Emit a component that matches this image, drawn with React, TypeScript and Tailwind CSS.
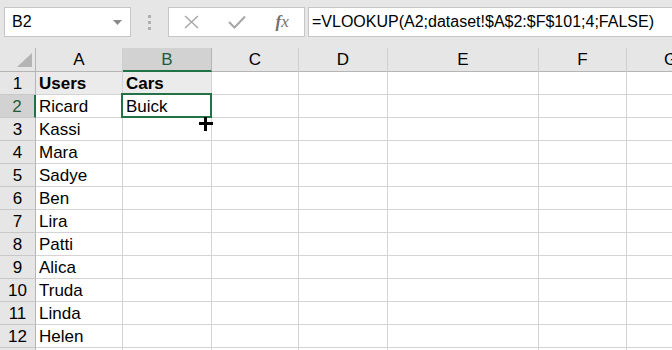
import React from "react";

const COLS = ["A", "B", "C", "D", "E", "F", "G"];
const USERS = ["Users", "Ricard", "Kassi", "Mara", "Sadye", "Ben", "Lira", "Patti", "Alica", "Truda", "Linda", "Helen"];

export default function App() {
  const font = { fontFamily: '"Liberation Sans", Arial, sans-serif' };
  return (
    <div className="w-[672px] h-[350px] overflow-hidden bg-white text-black" style={font}>
      {/* toolbar */}
      <div className="h-[48px] bg-[#e6e6e6] flex items-start pt-[7px] pl-[4px]">
        <div className="w-[127px] h-[30px] bg-white border border-[#c6c6c6] flex items-center pl-[7px] pr-[8px] text-[16px]">
          <span className="flex-1">B2</span>
          <svg width="9" height="5" viewBox="0 0 9 5"><path d="M0 0 L9 0 L4.5 5 Z" fill="#8a8a8a" /></svg>
        </div>
        <div className="w-[37px] h-[30px] flex flex-col items-center justify-center gap-[3px]">
          <div className="w-[3px] h-[3px] bg-[#b0b0b0]" />
          <div className="w-[3px] h-[3px] bg-[#b0b0b0]" />
          <div className="w-[3px] h-[3px] bg-[#b0b0b0]" />
        </div>
        <div className="w-[137px] h-[30px] bg-white border border-[#c6c6c6] flex items-center">
          <div className="w-[46px] flex justify-center">
            <svg width="15" height="14" viewBox="0 0 15 14"><path d="M1 1 L14 13 M14 1 L1 13" stroke="#a6a6a6" strokeWidth="1.4" fill="none" /></svg>
          </div>
          <div className="w-[46px] flex justify-center">
            <svg width="18" height="14" viewBox="0 0 18 14"><path d="M1 7 L6.5 12.5 L17 1.5" stroke="#a6a6a6" strokeWidth="2" fill="none" /></svg>
          </div>
          <div className="w-[44px] flex justify-center text-[#707070] text-[17px] italic" style={{ fontFamily: '"Liberation Serif", "Times New Roman", serif' }}>
            <span className="font-bold">f</span><span>x</span>
          </div>
        </div>
        <div className="ml-[3px] flex-1 h-[30px] bg-white border border-[#c6c6c6] border-r-0 flex items-center pl-[3px] text-[16px] whitespace-nowrap">
          =VLOOKUP(A2;dataset!$A$2:$F$101;4;FALSE)
        </div>
      </div>

      {/* grid */}
      <div className="relative w-[672px] overflow-hidden">
        <div className="grid grid-cols-[36px_87px_89px_87px_89px_151px_88px_88px] w-[715px] text-[17px]">
          {/* header row */}
          <div className="h-[24px] bg-[#e6e6e6] border-r border-b border-[#b5b5b5] relative">
            <svg className="absolute left-[17px] top-[5px]" width="15" height="14" viewBox="0 0 15 14"><path d="M15 0 L15 14 L0 14 Z" fill="#b4b4b4" /></svg>
          </div>
          {COLS.map((c) =>
            c === "B" ? (
              <div key={c} className="h-[24px] bg-[#d2d2d2] border-r border-[#b5b5b5] border-b-2 border-b-[#217346] flex items-center justify-center pt-[1px] text-[#1d5c3a]">
                {c}
              </div>
            ) : (
              <div key={c} className="h-[24px] bg-[#e6e6e6] border-r border-b border-r-[#cfcfcf] border-b-[#b5b5b5] flex items-center justify-center pt-[1px]">
                {c}
              </div>
            )
          )}
          {/* rows */}
          {Array.from({ length: 13 }).map((_, r) => {
            const n = r + 1;
            const sel = n === 2;
            return (
              <React.Fragment key={n}>
                <div
                  className={
                    sel
                      ? "h-[23px] bg-[#d2d2d2] border-r-2 border-r-[#217346] border-b border-b-[#c8c8c8] flex items-center justify-center pt-[2px] text-[#1d5c3a]"
                      : "h-[23px] bg-[#e6e6e6] border-r border-b border-r-[#b5b5b5] border-b-[#c8c8c8] flex items-center justify-center pt-[2px]"
                  }
                >
                  {n <= 12 ? n : ""}
                </div>
                {COLS.map((c) => {
                  let text = "";
                  if (c === "A" && n <= 12) text = USERS[r];
                  if (c === "B" && n === 1) text = "Cars";
                  if (c === "B" && n === 2) text = "Buick";
                  const shaded = n === 1 && (c === "A" || c === "B");
                  return (
                    <div
                      key={c}
                      className={
                        "h-[23px] border-r border-b border-[#d4d4d4] flex items-center pl-[3px] pt-[2px] whitespace-nowrap " +
                        (shaded ? "bg-[#ebebeb] font-bold" : "bg-white")
                      }
                    >
                      {text}
                    </div>
                  );
                })}
              </React.Fragment>
            );
          })}
        </div>
        {/* selection box */}
        <div className="absolute left-[121px] top-[45px] w-[91px] h-[25px] border-2 border-[#217346]" />
        {/* cursor */}
        <div className="absolute left-[199px] top-[69px] w-[14px] h-[14px]">
          <div className="absolute left-[5px] top-0 w-[3px] h-[14px] bg-black" />
          <div className="absolute left-0 top-[5px] w-[14px] h-[3px] bg-black" />
        </div>
      </div>
    </div>
  );
}
